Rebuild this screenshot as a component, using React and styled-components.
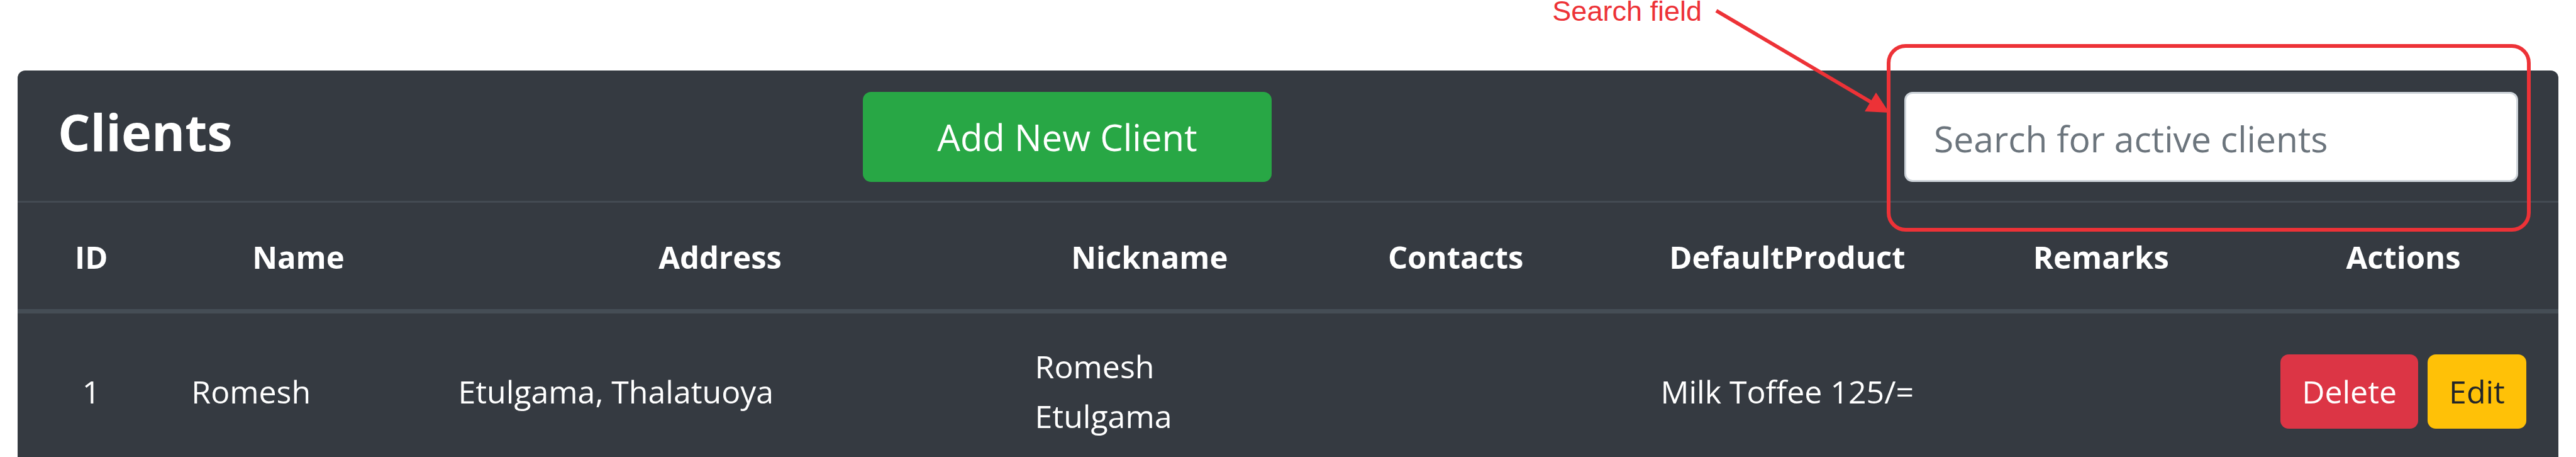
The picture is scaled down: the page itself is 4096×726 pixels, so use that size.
import React from "react";
import styled, { createGlobalStyle, css } from "styled-components";

const GlobalStyle = createGlobalStyle`
  * { box-sizing: border-box; }
  body {
    margin: 0;
    background: #ffffff;
    color: #ffffff;
    font-family: "Open Sans", "Noto Sans", sans-serif;
    font-size: 50px;
    line-height: 79px;
  }
`;

const Page = styled.main`
  position: relative;
  padding: 112px 28px 0;
`;

const Card = styled.section`
  background: #353a41;
  border-radius: 12px 12px 0 0;
  overflow: hidden;
`;

const CardHeader = styled.header`
  display: grid;
  grid-template-columns: 1280fr 650fr 1006fr 976fr;
  align-items: start;
  padding: 34px 64px 30px;
`;

const Title = styled.h3`
  margin: 0;
  font-size: 81px;
  font-weight: 700;
  line-height: 126px;
`;

const buttonColors = {
  success: css`background: #28a745; color: #ffffff;`,
  danger: css`background: #dc3545; color: #ffffff;`,
  warning: css`background: #ffc107; color: #212529;`,
};

const Button = styled.button`
  ${({ $variant }) => buttonColors[$variant]}
  border: 0;
  border-radius: 13px;
  padding: 0 34px;
  height: 118px;
  font: inherit;
  cursor: pointer;
`;

const AddButton = styled(Button)`
  width: 100%;
  height: 143px;
  font-size: 58px;
`;

const SearchInput = styled.input`
  grid-column: 4;
  width: 100%;
  height: 143px;
  padding: 4px 44px 0;
  border: 3px solid #ced4da;
  border-radius: 13px;
  background: #ffffff;
  color: #495057;
  font-family: inherit;
  font-size: 57px;
  &::placeholder { color: #6c757d; opacity: 1; }
`;

const Table = styled.table`
  width: 100%;
  table-layout: fixed;
  border-collapse: collapse;
  border-top: 3px solid #434a52;
`;

const Col = styled.col`
  width: ${({ $share }) => $share}%;
`;

const HeadCell = styled.th`
  padding: 47px 0 43px;
  border-bottom: 7px solid #454d55;
  font-weight: 700;
  font-size: 49px;
  text-align: center;
`;

const Cell = styled.td`
  padding: 45px 42px 25px;
  vertical-align: middle;
  text-align: ${({ $centered }) => ($centered ? "center" : "left")};
`;

const ActionCell = styled(Cell)`
  padding-left: 0;
  padding-right: 0;
`;

const Actions = styled.div`
  display: flex;
  justify-content: center;
  gap: 15px;
`;

const Note = styled.span`
  position: absolute;
  top: 0;
  right: 1390px;
  color: #ed3237;
  font-family: "Liberation Sans", Arial, sans-serif;
  font-size: 45px;
  line-height: 36px;
`;

const NoteArrow = styled.svg`
  position: absolute;
  top: 0;
  right: 1092px;
  width: 284px;
  height: 190px;
  pointer-events: none;
`;

const NoteFrame = styled.div`
  position: absolute;
  top: 70px;
  right: 72px;
  width: 25%;
  height: 298px;
  border: 6px solid #ed3237;
  border-radius: 30px;
  pointer-events: none;
`;

const columns = [
  { label: "ID", share: 5.8, centered: true },
  { label: "Name", share: 10.5 },
  { label: "Address", share: 22.7 },
  { label: "Nickname", share: 11.1 },
  { label: "Contacts", share: 13 },
  { label: "DefaultProduct", share: 13.1, centered: true },
  { label: "Remarks", share: 11.6 },
  { label: "Actions", share: 12.2 },
];

const clients = [
  ["1", "Romesh", "Etulgama, Thalatuoya", "Romesh Etulgama", "", "Milk Toffee 125/=", ""],
];

export default function App() {
  return (
    <>
      <GlobalStyle />
      <Page>
        <Card>
          <CardHeader>
            <Title>Clients</Title>
            <AddButton type="button" $variant="success">Add New Client</AddButton>
            <SearchInput
              type="text"
              aria-label="Search for active clients"
              placeholder="Search for active clients"
            />
          </CardHeader>
          <Table>
            <colgroup>
              {columns.map((c) => <Col key={c.label} $share={c.share} />)}
            </colgroup>
            <thead>
              <tr>
                {columns.map((c) => <HeadCell key={c.label} scope="col">{c.label}</HeadCell>)}
              </tr>
            </thead>
            <tbody>
              {clients.map((client) => (
                <tr key={client[0]}>
                  {client.map((value, i) => (
                    <Cell key={columns[i].label} $centered={columns[i].centered}>{value}</Cell>
                  ))}
                  <ActionCell>
                    <Actions>
                      <Button type="button" $variant="danger">Delete</Button>
                      <Button type="button" $variant="warning">Edit</Button>
                    </Actions>
                  </ActionCell>
                </tr>
              ))}
            </tbody>
          </Table>
        </Card>
        <Note>Search field</Note>
        <NoteArrow viewBox="0 0 284 190" aria-hidden="true">
          <line x1="9" y1="17" x2="258" y2="164" stroke="#ed3237" strokeWidth="6" />
          <polygon points="284,179 263,147 245,177" fill="#ed3237" />
        </NoteArrow>
        <NoteFrame />
      </Page>
    </>
  );
}
